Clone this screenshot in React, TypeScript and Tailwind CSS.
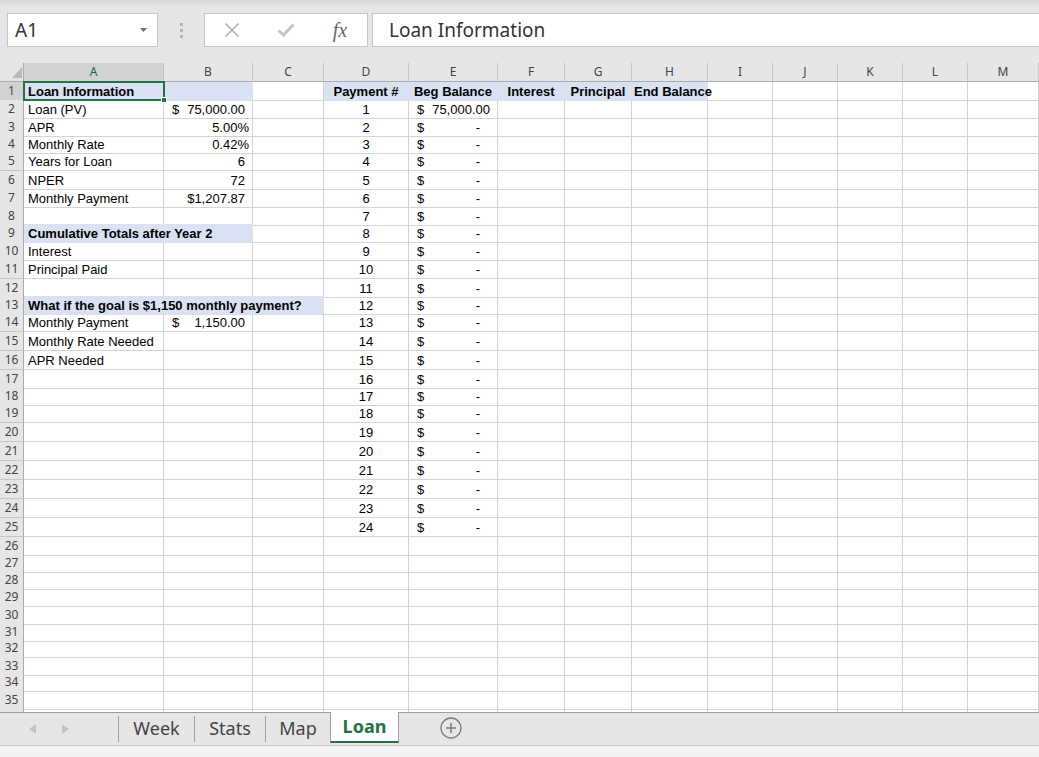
import React from 'react';

type Cell = {
  t?: string;
  b?: boolean;
  al?: 'l' | 'c' | 'r';
  pad?: string;
  acct?: string;
  fill?: boolean;
};

const COLS = ['A', 'B', 'C', 'D', 'E', 'F', 'G', 'H', 'I', 'J', 'K', 'L', 'M'];

const GRID =
  'grid grid-cols-[24px_140px_89px_71px_85px_89px_67px_67px_76px_65px_65px_65px_65px_71px]';

// row heights as Excel draws them at this zoom (incl. gridline); row 36 is cut by the tab bar
const ROW_H = [
  'h-[18px]', 'h-[18px]', 'h-[17px]', 'h-[17px]', 'h-[19px]', 'h-[18px]', 'h-[18px]',
  'h-[17px]', 'h-[18px]', 'h-[18px]', 'h-[19px]', 'h-[17px]', 'h-[17px]', 'h-[19px]',
  'h-[19px]', 'h-[19px]', 'h-[17px]', 'h-[17px]', 'h-[19px]', 'h-[19px]', 'h-[19px]',
  'h-[19px]', 'h-[19px]', 'h-[19px]', 'h-[19px]', 'h-[17px]', 'h-[17px]', 'h-[17px]',
  'h-[18px]', 'h-[17px]', 'h-[16px]', 'h-[18px]', 'h-[16px]', 'h-[18px]', 'h-[17px]',
  'h-[17px]',
];

const cells: Record<string, Cell> = {
  A1: { t: 'Loan Information', b: true, fill: true },
  B1: { fill: true },
  D1: { t: 'Payment #', b: true, al: 'c', fill: true },
  E1: { t: 'Beg Balance', b: true, al: 'c', fill: true },
  F1: { t: 'Interest', b: true, al: 'c', fill: true },
  G1: { t: 'Principal', b: true, al: 'c', fill: true },
  H1: { t: 'End Balance', b: true, fill: true, pad: 'pl-[2px]' },
  A2: { t: 'Loan (PV)' },
  B2: { acct: '75,000.00' },
  A3: { t: 'APR' },
  B3: { t: '5.00%', al: 'r', pad: 'pr-[3px]' },
  A4: { t: 'Monthly Rate' },
  B4: { t: '0.42%', al: 'r', pad: 'pr-[3px]' },
  A5: { t: 'Years for Loan' },
  B5: { t: '6', al: 'r', pad: 'pr-[7px]' },
  A6: { t: 'NPER' },
  B6: { t: '72', al: 'r', pad: 'pr-[7px]' },
  A7: { t: 'Monthly Payment' },
  B7: { t: '$1,207.87', al: 'r', pad: 'pr-[7px]' },
  A9: { t: 'Cumulative Totals after Year 2', b: true, fill: true },
  B9: { fill: true },
  A10: { t: 'Interest' },
  A11: { t: 'Principal Paid' },
  A13: { t: 'What if the goal is $1,150 monthly payment?', b: true, fill: true },
  B13: { fill: true },
  C13: { fill: true },
  A14: { t: 'Monthly Payment' },
  B14: { acct: '1,150.00' },
  A15: { t: 'Monthly Rate Needed' },
  A16: { t: 'APR Needed' },
};

for (let r = 2; r <= 25; r++) {
  cells[`D${r}`] = { t: String(r - 1), al: 'c' };
  cells[`E${r}`] = { acct: r === 2 ? '75,000.00' : '-' };
}

function CellView({ cell }: { cell?: Cell }) {
  const fill = cell?.fill;
  const box = `flex items-end min-w-0 pb-[1px] leading-[15px] whitespace-nowrap border-r border-b ${
    fill ? 'bg-[#d9e1f2] border-[#d9e1f2]' : 'border-[#d4d4d4]'
  }`;

  if (!cell || (!cell.t && !cell.acct)) return <div className={box} />;

  if (cell.acct) {
    const dash = cell.acct === '-';
    return (
      <div className={`${box} justify-between pl-[8px] ${dash ? 'pr-[17px]' : 'pr-[7px]'}`}>
        <span>$</span>
        <span>{cell.acct}</span>
      </div>
    );
  }

  const align =
    cell.al === 'c' ? 'justify-center' : cell.al === 'r' ? 'justify-end' : 'justify-start';
  const pad = cell.pad ?? (cell.al ? '' : 'pl-[4px]');
  return (
    <div className={`${box} ${align} ${pad}`}>
      <span className={`relative z-10 ${cell.b ? 'font-bold' : ''}`}>{cell.t}</span>
    </div>
  );
}

function SheetRow({ r }: { r: number }) {
  const active = r === 1;
  return (
    <div className={`${GRID} ${ROW_H[r - 1]}`}>
      <div
        className={`flex items-center justify-center border-r border-b border-r-[#ababab] border-b-[#c6c6c6] font-['Segoe_UI','Noto_Sans',sans-serif] text-[12px] ${
          active ? 'bg-[#d2d2d2] text-[#1f5f3c]' : 'bg-[#e6e6e6] text-[#444]'
        }`}
      >
        {r > 35 ? null : r}
      </div>
      {COLS.map((c) => (
        <CellView key={c} cell={cells[`${c}${r}`]} />
      ))}
    </div>
  );
}

function FormulaBar() {
  return (
    <div className="h-[63px] bg-[linear-gradient(to_bottom,#d6d6d6_0px,#e6e6e6_6px)] pt-[13px] pl-[7px] font-['Segoe_UI','Noto_Sans',sans-serif]">
      <div className="flex h-[34px]">
        <div className="flex w-[151px] items-center justify-between border border-[#c6c6c6] bg-white pl-[7px] pr-[10px]">
          <span className="text-[19px] text-[#333]">A1</span>
          <svg width="7" height="4" viewBox="0 0 7 4">
            <path d="M0 0h7L3.5 4z" fill="#707070" />
          </svg>
        </div>
        <div className="flex w-[46px] flex-col items-center justify-center gap-[3px]">
          <span className="h-[3px] w-[3px] bg-[#b4b4b4]" />
          <span className="h-[3px] w-[3px] bg-[#b4b4b4]" />
          <span className="h-[3px] w-[3px] bg-[#b4b4b4]" />
        </div>
        <div className="flex w-[164px] border border-[#c6c6c6] bg-white">
          <div className="flex w-[54px] items-center justify-center">
            <svg width="16" height="16" viewBox="0 0 16 16">
              <path d="M1.5 1.5l13 13M14.5 1.5l-13 13" stroke="#ababab" strokeWidth="1.4" />
            </svg>
          </div>
          <div className="flex w-[54px] items-center justify-center">
            <svg width="18" height="14" viewBox="0 0 18 14">
              <path d="M1.5 7.5l5 4.5L16.5 1.5" stroke="#c4c4c4" strokeWidth="3" fill="none" />
            </svg>
          </div>
          <div className="flex w-[54px] items-center justify-center">
            <span className="font-['Liberation_Serif',serif] text-[20px] italic text-[#666]">fx</span>
          </div>
        </div>
        <div className="ml-[4px] -mr-[2px] flex flex-1 items-center border border-[#c6c6c6] bg-white pl-[16px]">
          <span className="text-[19px] text-[#333]">Loan Information</span>
        </div>
      </div>
    </div>
  );
}

function ColumnHeader() {
  return (
    <div className={`${GRID} h-[19px] bg-[#e6e6e6] font-['Segoe_UI','Noto_Sans',sans-serif] text-[12px]`}>
      <div className="flex items-end justify-end border-b border-r border-[#ababab] pb-[3px] pr-[1px]">
        <svg width="10" height="11" viewBox="0 0 10 11">
          <path d="M10 0v11H0z" fill="#b9b9b9" />
        </svg>
      </div>
      {COLS.map((c) => (
        <div
          key={c}
          className={`flex items-center justify-center border-r border-b border-r-[#c6c6c6] border-b-[#ababab] ${
            c === 'A' ? 'bg-[#d2d2d2] text-[#1f5f3c]' : 'text-[#444]'
          }`}
        >
          {c}
        </div>
      ))}
    </div>
  );
}

function Sheet() {
  return (
    <div className="relative h-[649px] overflow-hidden bg-white font-['Liberation_Sans',Arial,sans-serif] text-[13px] text-black">
      <ColumnHeader />
      {ROW_H.map((_, i) => (
        <SheetRow key={i} r={i + 1} />
      ))}
      {/* active cell A1 */}
      <div className="absolute left-[23px] top-[18px] z-20 h-[20px] w-[142px] border-2 border-[#217346]">
        <div className="absolute -bottom-[4px] -right-[4px] h-[6px] w-[6px] border border-white bg-[#217346]" />
      </div>
    </div>
  );
}

function Tabs() {
  const tabs = ['Week', 'Stats', 'Map'];
  const widths = ['w-[76px]', 'w-[71px]', 'w-[65px]'];
  return (
    <div className="flex h-[33px] border-t border-[#9e9e9e] bg-[#e6e6e6] font-['Segoe_UI','Noto_Sans',sans-serif] text-[18px]">
      <div className="flex w-[118px] items-center gap-[26px] pb-[1px] pl-[29px]">
        <svg width="7" height="10" viewBox="0 0 7 10">
          <path d="M7 0v10L0 5z" fill="#c4c4c4" />
        </svg>
        <svg width="7" height="10" viewBox="0 0 7 10">
          <path d="M0 0v10l7-5z" fill="#c4c4c4" />
        </svg>
      </div>
      {tabs.map((t, i) => (
        <div key={t} className={`flex ${widths[i]} items-center`}>
          <span className="h-[26px] w-px bg-[#a0a0a0]" />
          <span className="flex-1 pb-[2px] text-center text-[#444]">{t}</span>
        </div>
      ))}
      <div className="-mt-px flex h-[31px] w-[69px] items-center justify-center border-x border-b-2 border-x-[#a0a0a0] border-b-[#217346] bg-white pb-[1px] font-bold text-[#217346]">
        Loan
      </div>
      <div className="flex w-[103px] items-center justify-center pb-[2px]">
        <svg width="22" height="22" viewBox="0 0 22 22">
          <circle cx="11" cy="11" r="10" fill="none" stroke="#7b7b7b" strokeWidth="1.3" />
          <path d="M11 6v10M6 11h10" stroke="#7b7b7b" strokeWidth="1.5" />
        </svg>
      </div>
    </div>
  );
}

export default function App() {
  return (
    <div className="flex h-[757px] w-full flex-col overflow-hidden bg-[#e6e6e6]">
      <FormulaBar />
      <Sheet />
      <Tabs />
      <div className="h-[12px] border-t border-[#c8c6c4] bg-[#f3f2f1]" />
    </div>
  );
}
